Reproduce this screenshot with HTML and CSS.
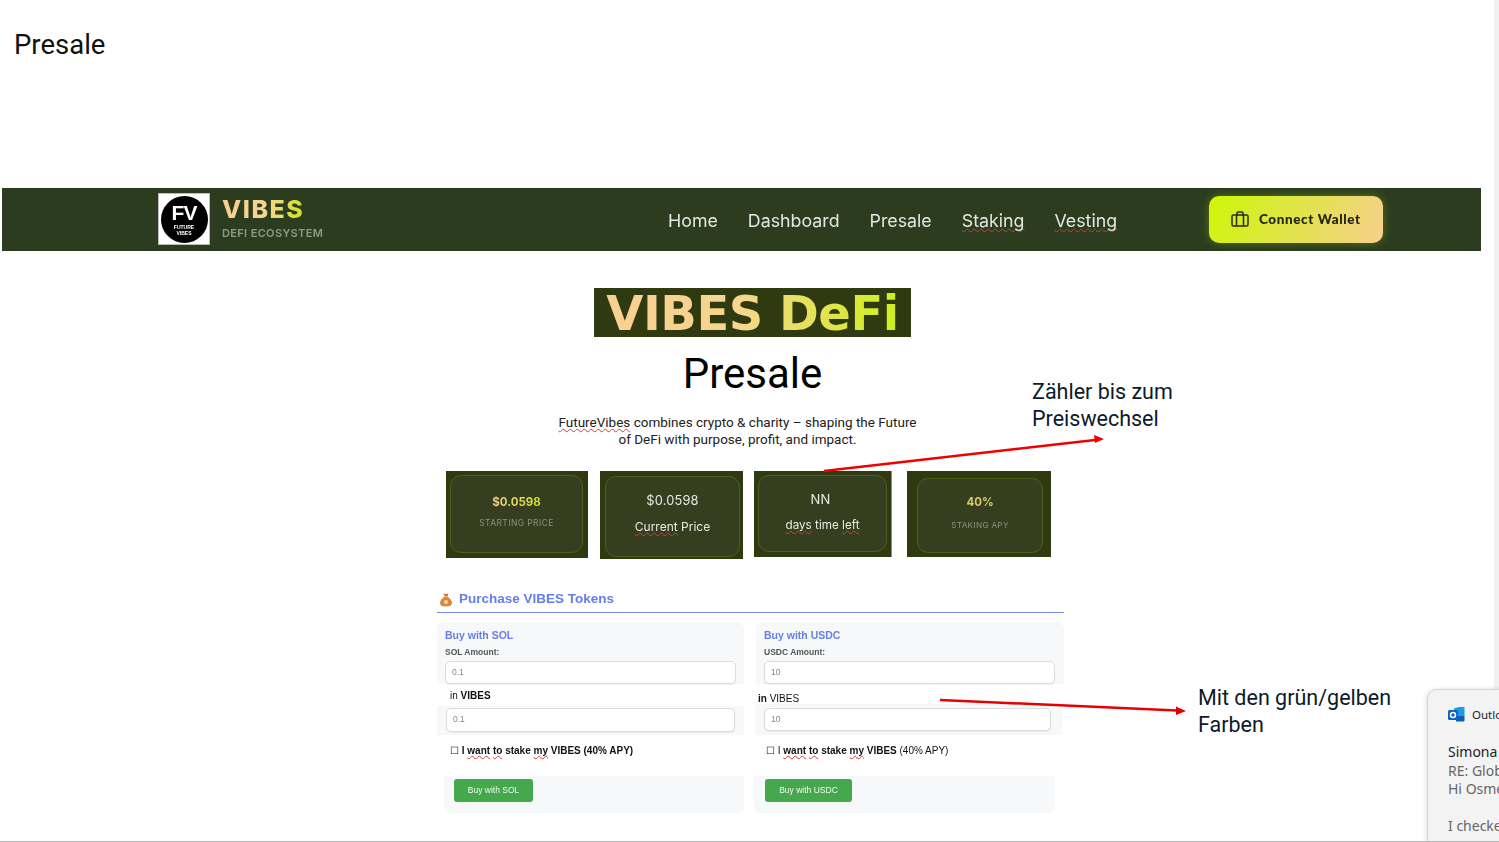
FILE: index.html
```html
<!DOCTYPE html>
<html lang="en">
<head>
	<meta charset="UTF-8">
	<title>Presale</title>
	<link rel="stylesheet" href="styles.css">
</head>
<body>
	<div class="slide">
		<h1 class="slide-title">Presale</h1>

		<header class="nav">
			<div class="logo">
				<div class="logo-box">
					<div class="logo-circle">
						<span class="logo-mark">FV</span>
						<span class="logo-small">FUTURE<br>VIBES</span>
					</div>
				</div>
				<div class="logo-text">
					<span class="logo-name">VIBES</span>
					<span class="logo-sub">DEFI ECOSYSTEM</span>
				</div>
			</div>
			<nav class="menu">
				<a>Home</a>
				<a>Dashboard</a>
				<a>Presale</a>
				<a class="typo">Staking</a>
				<a class="typo">Vesting</a>
			</nav>
			<button class="wallet">
				<svg width="18" height="16" viewBox="0 0 18 16" fill="none" stroke="#2b2b14" stroke-width="1.5"><rect x="1" y="4" width="16" height="11" rx="1.5"/><path d="M5.5 4v11M12.5 4v11M6 4V2.2C6 1.5 6.5 1 7.2 1h3.6c.7 0 1.2.5 1.2 1.2V4"/></svg>
				Connect Wallet
			</button>
		</header>

		<main class="hero">
			<div class="banner"><span>VIBES DeFi</span></div>
			<h2 class="hero-title">Presale</h2>
			<p class="intro"><span class="typo">FutureVibes</span> combines crypto &amp; charity – shaping the Future<br>of DeFi with purpose, profit, and impact.</p>

			<section class="cards">
				<div class="card card-1">
					<div class="card-in">
						<b class="price">$0.0598</b>
						<span class="caption">STARTING PRICE</span>
					</div>
				</div>
				<div class="card card-2">
					<div class="card-in edited">
						<span class="edited-big">$0.0598</span>
						<span class="edited-small"><span class="typo">Current</span> Price</span>
					</div>
				</div>
				<div class="card card-3">
					<div class="card-in edited">
						<span class="edited-big nn">NN</span>
						<span class="edited-small days"><span class="typo">days</span> time <span class="typo">left</span></span>
					</div>
				</div>
				<div class="card card-4">
					<div class="card-in">
						<b class="price apy">40%</b>
						<span class="caption">STAKING APY</span>
					</div>
				</div>
			</section>

			<section class="purchase">
				<h3 class="purchase-title">
					<svg width="14" height="15" viewBox="0 0 14 15"><path d="M4.6 1.2 7 2.2l2.4-1-1 3H5.6z" fill="#b5763a"/><path d="M5.4 4.6h3.2C10.8 6.4 13 8.600 13 11c0 2.400-2 3.500-6 3.500S1 13.400 1 11c0-2.400 2.200-4.600 4.400-6.400z" fill="#d9883c"/><rect x="5" y="4" width="4" height="1.200" fill="#f0c070"/><circle cx="7" cy="10" r="2" fill="#f4d9a8"/></svg>
					Purchase VIBES Tokens
				</h3>
				<div class="buy-cols">
					<div class="buy buy-sol">
						<div class="panel panel-top">
							<h4>Buy with SOL</h4>
							<label>SOL Amount:</label>
							<div class="field">0.1</div>
						</div>
						<div class="in-row">in <b>VIBES</b></div>
						<div class="panel panel-mid"><div class="field">0.1</div></div>
						<div class="stake">☐ <b>I <span class="typo">want</span> <span class="typo">to</span> stake <span class="typo">my</span> VIBES (40% APY)</b></div>
						<div class="panel panel-btn"><button class="buy-btn">Buy with SOL</button></div>
					</div>
					<div class="buy buy-usdc">
						<div class="panel panel-top">
							<h4>Buy with USDC</h4>
							<label>USDC Amount:</label>
							<div class="field">10</div>
						</div>
						<div class="in-row"><b>in</b> VIBES</div>
						<div class="panel panel-mid"><div class="field">10</div></div>
						<div class="stake">☐ I <b><span class="typo">want</span> <span class="typo">to</span> stake <span class="typo">my</span> VIBES</b> (40% APY)</div>
						<div class="panel panel-btn"><button class="buy-btn">Buy with USDC</button></div>
					</div>
				</div>
			</section>
		</main>

		<!-- annotations on top of the slide -->
		<p class="note note-1">Zähler bis zum<br>Preiswechsel</p>
		<p class="note note-2">Mit den grün/gelben<br>Farben</p>
		<svg class="arrows" width="1499" height="842" viewBox="0 0 1499 842">
			<path d="M824 471 1095 440" stroke="#f00000" stroke-width="2.5" fill="none"/>
			<path d="M1104 439 1094 435 1095 443z" fill="#f00000"/>
			<path d="M940 700 1177 710.500" stroke="#e60000" stroke-width="2.5" fill="none"/>
			<path d="M1186 711 1176 706.500 1176 715z" fill="#e60000"/>
		</svg>

		<aside class="toast">
			<div class="toast-head">
				<svg width="17" height="15" viewBox="0 0 17 15"><path d="M6 1.500 11 0h5.500v9H6z" fill="#1c9be0"/><path d="M8 9h8.500v4.500c0 .5-.4 1-1 1H8z" fill="#0f5fb0"/><rect x="0" y="3" width="10" height="10" rx="1.500" fill="#0b63c4"/><circle cx="5" cy="8" r="2.500" fill="none" stroke="#fff" stroke-width="1.500"/></svg>
				<span>Outlook</span>
			</div>
			<div class="toast-from">Simona Stoica</div>
			<div class="toast-line">RE: Global</div>
			<div class="toast-line">Hi Osmer</div>
			<div class="toast-line toast-last">I checked</div>
		</aside>
	</div>
</body>
</html>
```

FILE: styles.css
```css
* { box-sizing: border-box; }
html, body { margin: 0; padding: 0; }
body { background: #fff; font-family: Roboto, sans-serif; color: #111; }

.slide { position: relative; width: 1499px; height: 842px; overflow: hidden; background: #fff; border-bottom: 1px solid #b5b5b5; }
.slide::after { content: ""; position: absolute; top: 0; right: 0; bottom: 0; width: 5px; background: #f0f0f0; }

.typo { text-decoration: underline wavy #d43b3b 1px; text-underline-offset: 1px; text-decoration-skip-ink: none; }

.slide-title { margin: 0; height: 188px; padding: 28px 0 0 14px; font-size: 27.500px; line-height: 34px; font-weight: 400; }

/* top bar */
.nav { display: flex; align-items: center; width: 1479px; height: 63px; margin-left: 2px; padding-left: 156px; background: #2b3d1e; filter: blur(.35px); }
.logo { display: flex; align-items: center; gap: 12px; width: 510px; }
.logo-box { display: flex; align-items: center; justify-content: center; width: 52px; height: 52px; margin-top: -1px; background: #fff; border: 1px solid #bbb; }
.logo-circle { display: flex; flex-direction: column; align-items: center; width: 47px; height: 47px; border-radius: 50%; background: #000; color: #fff; padding-top: 6px; }
.logo-mark { font: 700 21px/21px "Liberation Sans", sans-serif; letter-spacing: -1px; }
.logo-small { font: 700 5px/6px "Liberation Sans", sans-serif; text-align: center; margin-top: 1px; }
.logo-text { display: flex; flex-direction: column; gap: 3px; margin-top: -4px; }
.logo-name { font: 800 25px/27px Inter, sans-serif; letter-spacing: 1.500px; width: max-content; background: linear-gradient(90deg, #f9cf93 0%, #f7d58e 55%, #cde51e 100%); -webkit-background-clip: text; background-clip: text; color: transparent; }
.logo-sub { font: 600 11px/14px Inter, sans-serif; letter-spacing: .35px; color: #8d9a85; }

.menu { display: flex; gap: 30px; width: 541px; font: 400 17.800px/24px Inter, sans-serif; color: #e4e7e0; padding-top: 3px; }

.wallet { display: flex; align-items: center; gap: 10px; width: 174px; height: 47px; padding: 0 0 2px 22px; border: 0; border-radius: 10px; background: linear-gradient(115deg, #cdf707 0%, #f6cf8e 100%); box-shadow: 0 0 8px rgba(190, 220, 20, .35); font: 900 13.500px/16px Lato, sans-serif; letter-spacing: .6px; color: #23230f; }

/* middle part */
.hero { display: flex; flex-direction: column; align-items: center; padding: 37px 0 0 6px; }
.banner { display: flex; align-items: center; justify-content: center; width: 317px; height: 49px; background: #2f3a10; }
.banner span { font: 700 48px/49px "DejaVu Sans", sans-serif; letter-spacing: -.5px; padding-top: 2px; background: linear-gradient(90deg, #f9cf93 0%, #f7d58e 45%, #cdf01a 100%); -webkit-background-clip: text; background-clip: text; color: transparent; }
.hero-title { margin: 13px 0 0; font-size: 42px; line-height: 48px; font-weight: 400; color: #000; }
.intro { margin: 16px 0 0 -30px; font-size: 13.500px; line-height: 17px; text-align: center; color: #222; }

/* stat cards */
.cards { display: flex; align-items: flex-start; width: 605px; margin: 23px 0 0 -8px; filter: blur(.3px); }
.card { flex: none; background: #2f3a10; font-family: Inter, sans-serif; }
.card-in { display: flex; flex-direction: column; align-items: center; justify-content: center; height: 100%; border: 1px solid #4e5d20; border-radius: 11px; background: #353f20; }
.card-1 { width: 142px; height: 87px; padding: 4px 5px 5px 4px; }
.card-2 { width: 143px; height: 88px; margin-left: 12px; padding: 5px 3px 2px 5px; }
.card-3 { width: 138px; height: 86px; margin-left: 11px; padding: 4px 4px 5px 4px; border-right: 1px solid #8a8f78; }
.card-4 { width: 144px; height: 86px; margin-left: 15px; padding: 7px 8px 4px 10px; }

.price { margin-bottom: 4px; font-size: 11.500px; line-height: 14px; font-weight: 700; background: linear-gradient(90deg, #f4c98c, #d8e82a); -webkit-background-clip: text; background-clip: text; color: transparent; }
.price.apy { margin-bottom: 6px; background: none; color: #dccb5c; -webkit-background-clip: border-box; background-clip: border-box; }
.caption { margin-top: 5px; margin-bottom: 4px; font-size: 8.500px; line-height: 11px; letter-spacing: .4px; color: #8b9180; }
.card-4 .caption { font-size: 8.200px; letter-spacing: .3px; margin-bottom: 6px; }
.edited { justify-content: flex-start; color: #e8eae2; }
.edited-big { margin-top: 15px; font-size: 12.800px; line-height: 18px; letter-spacing: .2px; }
.edited-small { margin-top: 8px; font-size: 12px; line-height: 18px; }
.edited-big.nn { margin: 14px 4px 0 0; font-size: 13px; }
.edited-small.days { margin-top: 8px; font-size: 11.700px; }

/* purchase box */
.purchase { width: 627px; margin: 30px 0 0 -4px; font-family: "Liberation Sans", sans-serif; filter: blur(.3px); }
.purchase-title { display: flex; align-items: center; gap: 6px; height: 24px; margin: 0; padding: 0 0 3px 2px; border-bottom: 1px solid #7b8fe8; font-size: 13.500px; line-height: 18px; color: #667eea; }
.buy-cols { display: flex; gap: 11px; margin-top: 9px; }
.buy { display: flex; flex-direction: column; width: 307px; }
.buy-usdc { width: 309px; }

.panel { background: #f7f8fa; }
.panel-top { height: 62px; padding: 7px 8px 0 8px; border-radius: 7px 7px 0 0; }
.panel-top h4 { margin: 0; font-size: 10.500px; line-height: 13px; color: #667eea; }
.panel-top label { display: block; margin-top: 5px; font-size: 8.500px; font-weight: 700; line-height: 11px; color: #555; }
.field { height: 23px; margin-top: 3px; padding-left: 6px; border: 1px solid #dcdcdc; border-radius: 5px; background: #fff; box-shadow: 0 1px 1px rgba(0, 0, 0, .06); font-size: 8.500px; line-height: 21px; color: #888; }
.panel-top .field { width: 291px; margin-top: 3px; }
.panel-mid { height: 29px; padding: 2px 9px 0 9px; }
.panel-mid .field { height: 24px; margin: 0; }
.in-row { height: 22px; padding-left: 13px; font-size: 10px; line-height: 23px; color: #111; }
.stake { height: 41px; padding: 10px 0 0 13px; font-size: 10px; line-height: 12px; color: #111; }
.panel-btn { height: 37px; margin-left: 7px; padding: 3px 0 0 10px; border-radius: 0 0 7px 7px; }
.buy-btn { width: 79px; height: 23px; padding: 0; border: 0; border-radius: 3px; background: #46a84c; color: #f2f8f2; font: 400 8.500px/23px "Liberation Sans", sans-serif; }

.buy-usdc .panel-top { margin-left: 1px; padding-left: 8px; }
.buy-usdc .in-row { height: 20px; padding-left: 3px; line-height: 29px; }
.buy-usdc .panel-mid { padding: 4px 11px 0 9px; height: 31px; margin-right: 2px; }
.buy-usdc .panel-mid .field { height: 23px; }
.buy-usdc .stake { height: 41px; padding-left: 11px; }
.buy-usdc .panel-btn { margin-left: -1px; margin-right: 9px; padding-left: 11px; }
.buy-usdc .buy-btn { width: 87px; }

/* notes and arrows */
.note { position: absolute; margin: 0; font-size: 21.500px; line-height: 27px; color: #0c1a2a; }
.note-1 { left: 1032px; top: 378px; }
.note-2 { left: 1198px; top: 684px; }
.arrows { position: absolute; left: 0; top: 0; pointer-events: none; }

/* outlook popup, cut by the window */
.toast { position: absolute; left: 1427px; top: 689px; z-index: 2; width: 200px; height: 200px; padding: 17px 0 0 20px; border: 1px solid #d4d4d4; border-radius: 10px; background: #f3f3f3; box-shadow: -1px 0 4px rgba(0, 0, 0, .12); font-family: "Noto Sans", sans-serif; font-size: 14px; white-space: nowrap; }
.toast-head { display: flex; align-items: center; gap: 7px; font-size: 11.500px; line-height: 15px; color: #222; }
.toast-from { margin-top: 20px; font-size: 14px; line-height: 20px; color: #222; }
.toast-line { font-size: 14px; line-height: 18px; color: #666; }
.toast-last { margin-top: 19px; }
```
